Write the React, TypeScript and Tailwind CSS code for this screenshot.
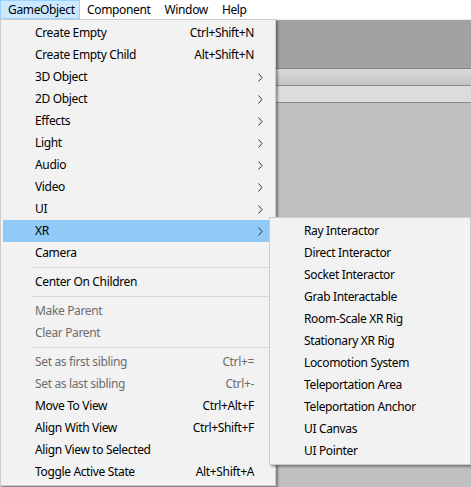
import React from "react";

type Item =
  | { kind: "item"; label: string; shortcut?: string; sub?: boolean; disabled?: boolean; active?: boolean }
  | { kind: "sep" };

const items: Item[] = [
  { kind: "item", label: "Create Empty", shortcut: "Ctrl+Shift+N" },
  { kind: "item", label: "Create Empty Child", shortcut: "Alt+Shift+N" },
  { kind: "item", label: "3D Object", sub: true },
  { kind: "item", label: "2D Object", sub: true },
  { kind: "item", label: "Effects", sub: true },
  { kind: "item", label: "Light", sub: true },
  { kind: "item", label: "Audio", sub: true },
  { kind: "item", label: "Video", sub: true },
  { kind: "item", label: "UI", sub: true },
  { kind: "item", label: "XR", sub: true, active: true },
  { kind: "item", label: "Camera" },
  { kind: "sep" },
  { kind: "item", label: "Center On Children" },
  { kind: "sep" },
  { kind: "item", label: "Make Parent", disabled: true },
  { kind: "item", label: "Clear Parent", disabled: true },
  { kind: "sep" },
  { kind: "item", label: "Set as first sibling", shortcut: "Ctrl+=", disabled: true },
  { kind: "item", label: "Set as last sibling", shortcut: "Ctrl+-", disabled: true },
  { kind: "item", label: "Move To View", shortcut: "Ctrl+Alt+F" },
  { kind: "item", label: "Align With View", shortcut: "Ctrl+Shift+F" },
  { kind: "item", label: "Align View to Selected" },
  { kind: "item", label: "Toggle Active State", shortcut: "Alt+Shift+A" },
];

const xrItems = [
  "Ray Interactor",
  "Direct Interactor",
  "Socket Interactor",
  "Grab Interactable",
  "Room-Scale XR Rig",
  "Stationary XR Rig",
  "Locomotion System",
  "Teleportation Area",
  "Teleportation Anchor",
  "UI Canvas",
  "UI Pointer",
];

function Chevron() {
  return (
    <svg width="5" height="9" viewBox="0 0 5 9" className="block">
      <path d="M0.5 0.5 L4 4.5 L0.5 8.5" fill="none" stroke="#333" strokeWidth="1" />
    </svg>
  );
}

export default function App() {
  return (
    <div
      className="w-[471px] h-[487px] overflow-hidden bg-[#c0c0c0] flex flex-col text-[12px] tracking-[-0.35px] text-black"
      style={{ fontFamily: '"Noto Sans", "Segoe UI", sans-serif' }}
    >
      {/* menu bar */}
      <div className="h-[19px] bg-white flex items-stretch shrink-0">
        <div className="w-[80px] bg-[#cce8ff] border border-[#99d1ff] flex items-center pl-[7px] leading-none">
          GameObject
        </div>
        <div className="flex items-center pl-[7px] pr-[10px] leading-none">Component</div>
        <div className="flex items-center pl-[4px] pr-[10px] leading-none">Window</div>
        <div className="flex items-center pl-[4px] leading-none">Help</div>
      </div>

      {/* editor background */}
      <div className="relative flex-1 flex flex-col">
        <div className="h-[1px] bg-[#f0f0f0]" />
        <div className="h-[48px] bg-[#a2a2a2]" />
        <div className="h-[17px] bg-gradient-to-b from-[#dadada] to-[#c4c4c4] border-t border-[#858585]" />
        <div className="h-[17px] bg-[#dcdcdc] border-t border-[#8a8a8a]" />
        <div className="flex-1 bg-[#c0c0c0] border-t border-[#8a8a8a]" />

        {/* GameObject menu */}
        <div className="absolute left-0 top-0 w-[276px] bg-[#f2f2f2] border border-[#cccccc] shadow-[2px_2px_2px_rgba(0,0,0,0.35)] p-[2px]">
          {items.map((it, i) =>
            it.kind === "sep" ? (
              <div key={i} className="h-[7px] flex items-center pl-[29px] pr-[3px]">
                <div className="h-[1px] w-full bg-[#d7d7d7]" />
              </div>
            ) : (
              <div
                key={i}
                className={`h-[22px] flex items-center pl-[32px] pr-[8px] ${
                  it.active ? "bg-[#91c9f7]" : ""
                } ${it.disabled ? "text-[#6d6d6d]" : ""}`}
              >
                <span className="flex-1 whitespace-nowrap">{it.label}</span>
                {it.shortcut && <span className="whitespace-nowrap mr-[11px]">{it.shortcut}</span>}
                {it.sub && (
                  <span className="mr-[2px]">
                    <Chevron />
                  </span>
                )}
              </div>
            )
          )}
        </div>

        {/* XR submenu */}
        <div className="absolute left-[269px] top-[198px] w-[202px] bg-[#f2f2f2] border border-[#cccccc] shadow-[2px_2px_2px_rgba(0,0,0,0.35)] py-[2px] pl-[2px]">
          {xrItems.map((label) => (
            <div key={label} className="h-[22px] flex items-center pl-[32px] whitespace-nowrap">
              {label}
            </div>
          ))}
        </div>
      </div>
    </div>
  );
}
